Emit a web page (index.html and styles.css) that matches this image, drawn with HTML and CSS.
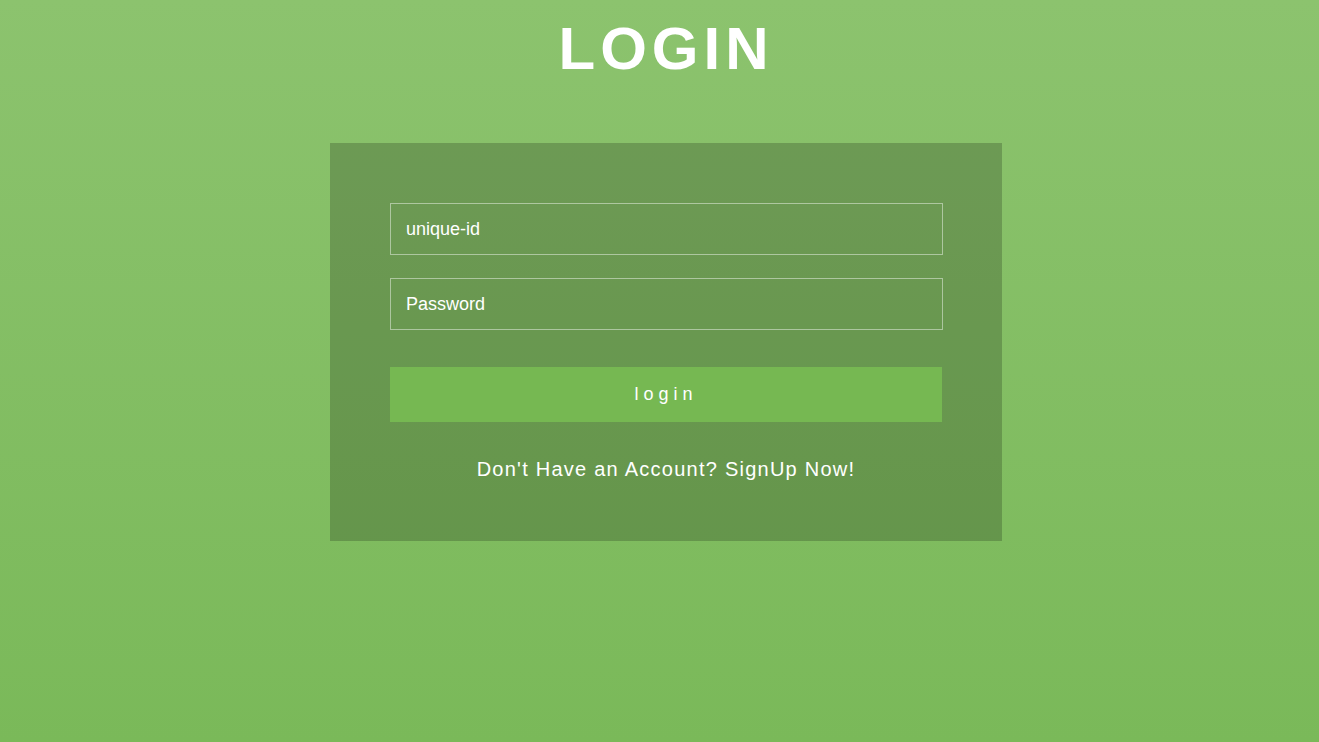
FILE: index.html
```html
<!DOCTYPE html>
<html lang="en">
<head>
<meta charset="utf-8">
<title>Login</title>
<link rel="stylesheet" href="styles.css">
</head>
<body>
<main class="page">
  <h1 class="title">LOGIN</h1>
  <form class="card">
    <input class="field" type="text" placeholder="unique-id">
    <input class="field" type="password" placeholder="Password">
    <button class="submit" type="button">login</button>
    <p class="signup">Don't Have an Account? SignUp Now!</p>
  </form>
</main>
</body>
</html>
```
FILE: styles.css
```css
html, body {
  margin: 0;
  height: 100%;
}
body {
  background: linear-gradient(to bottom, #8cc36e 0%, #7ab959 100%);
  font-family: "Liberation Sans", Arial, sans-serif;
  color: #fff;
}
.page {
  display: flex;
  flex-direction: column;
  align-items: center;
  padding: 14px 0 0 13px;
}
.title {
  margin: 0;
  font-size: 60px;
  font-weight: bold;
  letter-spacing: 5px;
  line-height: normal;
}
.card {
  margin-top: 60px;
  width: 672px;
  box-sizing: border-box;
  padding: 60px 60px 60px;
  background: rgba(0, 0, 0, 0.2);
  display: flex;
  flex-direction: column;
}
.field {
  box-sizing: border-box;
  width: 553px;
  height: 52px;
  margin: 0 0 23px;
  padding: 0 15px;
  border: 1px solid rgba(255, 255, 255, 0.45);
  background: transparent;
  color: #fff;
  font-family: "Liberation Sans", Arial, sans-serif;
  font-size: 18px;
  outline: none;
}
.field::placeholder {
  color: #fff;
  opacity: 1;
}
.field + .field {
  margin-bottom: 37px;
}
.submit {
  width: 552px;
  height: 55px;
  border: 0;
  background: #76b852;
  color: #fff;
  font-family: "Liberation Sans", Arial, sans-serif;
  font-size: 18px;
  letter-spacing: 5px;
  padding: 0;
  cursor: pointer;
}
.signup {
  margin: 36px 0 0;
  text-align: center;
  font-size: 20px;
  letter-spacing: 1.25px;
  line-height: 23px;
  color: #fff;
}
```
